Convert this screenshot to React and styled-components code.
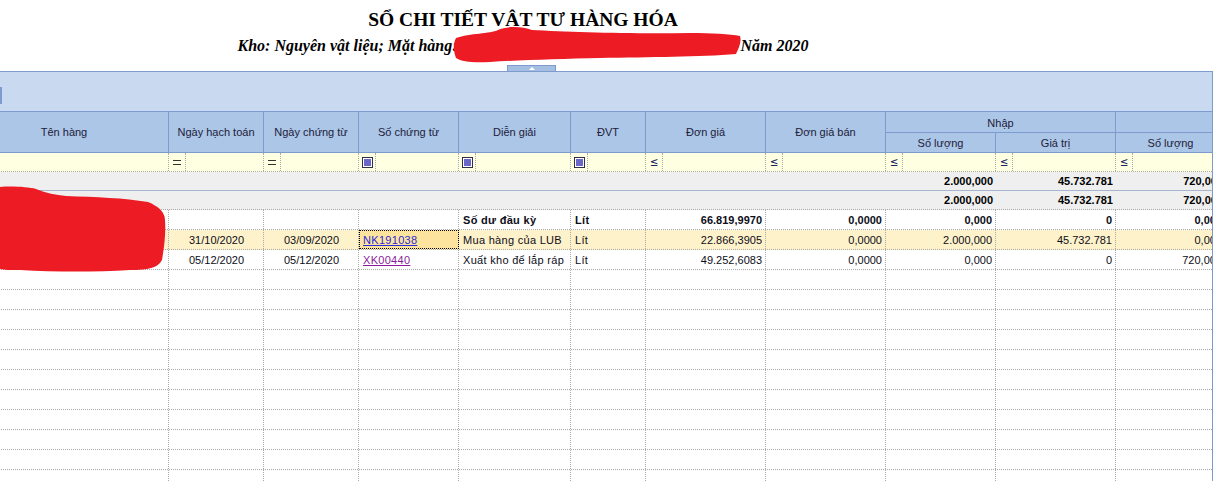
import React from 'react';
import styled, { createGlobalStyle } from 'styled-components';

const COLS = [209, 95, 95, 100, 112, 75, 120, 120, 110, 120, 110, 120];
const TEMPLATE = COLS.map((c) => c + 'px').join(' ');
const ALIGN = ['left', 'center', 'center', 'left', 'left', 'left', 'right', 'right', 'right', 'right', 'right', 'right'];
const BORDER = '#7d9bcf';
const DOT = '#a9a9a9';

const GlobalStyle = createGlobalStyle`
  html, body { margin: 0; padding: 0; background: #fff; overflow: hidden; }
  body { font-family: "Liberation Sans", Arial, sans-serif; }
`;

const Page = styled.div`
  position: relative;
  width: 1219px;
  height: 481px;
  overflow: hidden;
`;

const TitleBlock = styled.div`
  position: relative;
  width: 1046px;
  height: 71px;
  box-sizing: border-box;
  padding-top: 9px;
  text-align: center;
  font-family: "Liberation Serif", "Times New Roman", serif;
  color: #000;
`;

const Title = styled.div`
  font-size: 19.5px;
  font-weight: bold;
  line-height: 22px;
`;

const Subtitle = styled.div`
  margin-top: 5px;
  font-size: 16px;
  font-weight: bold;
  font-style: italic;
  line-height: 20px;
`;

const Hidden = styled.span`
  display: inline-block;
  width: 283px;
`;

const SplitHandle = styled.div`
  position: absolute;
  left: 507px;
  top: 65px;
  width: 47px;
  height: 5px;
  background: #a4bfe2;
  border: 1px solid ${BORDER};
  border-bottom: none;
  display: flex;
  justify-content: center;
  align-items: center;
  &::after {
    content: '';
    width: 0;
    height: 0;
    border-left: 3px solid transparent;
    border-right: 3px solid transparent;
    border-bottom: 3px solid #fff;
  }
`;

const Panel = styled.div`
  width: 1213px;
  box-sizing: border-box;
  border-top: 1px solid ${BORDER};
  border-right: 1px solid ${BORDER};
  background: #c9daf0;
`;

const Toolbar = styled.div`
  height: 39px;
  display: flex;
  align-items: flex-start;
`;

const ToolbarMark = styled.div`
  width: 2px;
  height: 17px;
  margin-top: 15px;
  background: ${BORDER};
`;

const Viewport = styled.div`
  width: 1212px;
  overflow: hidden;
  background: #fff;
  height: 420px;
`;

const Table = styled.div`
  margin-left: -40px;
  width: ${COLS.reduce((a, b) => a + b, 0)}px;
`;

const Header = styled.div`
  display: grid;
  grid-template-columns: ${TEMPLATE};
  grid-template-rows: 21px 20px;
  border-top: 1px solid ${BORDER};
  background: #abc6e6;
`;

const HeadCell = styled.div`
  grid-row: ${(p) => (p.$tall ? 'span 2' : 'auto')};
  grid-column: ${(p) => (p.$group ? 'span 2' : 'auto')};
  box-sizing: border-box;
  border-right: 1px solid ${BORDER};
  border-bottom: 1px solid ${BORDER};
  display: flex;
  align-items: center;
  justify-content: center;
  font-size: 11px;
  color: #22203a;
  white-space: nowrap;
  padding-top: ${(p) => (p.$group ? '1px' : '0')};
`;

const FilterRow = styled.div`
  display: grid;
  grid-template-columns: ${TEMPLATE};
  height: 19px;
  box-sizing: border-box;
  border-bottom: 1px dotted ${DOT};
  background: #ffffe1;
`;

const FilterCell = styled.div`
  box-sizing: border-box;
  border-right: 1px dotted ${DOT};
  display: flex;
  align-items: stretch;
`;

const OpBox = styled.div`
  width: 17px;
  box-sizing: border-box;
  border-right: 1px dotted ${DOT};
  display: flex;
  align-items: center;
  justify-content: center;
`;

const EqSign = styled.span`
  width: 8px;
  height: 3px;
  border-top: 1px solid #333;
  border-bottom: 1px solid #333;
`;

const LeSign = styled.span`
  font-size: 12px;
  line-height: 12px;
  color: #1c2563;
  font-family: "DejaVu Sans", sans-serif;
  transform: scaleX(0.85);
`;

const CheckSign = styled.span`
  width: 9px;
  height: 9px;
  border: 1px solid #30304a;
  background: #fff;
  display: flex;
  align-items: center;
  justify-content: center;
  &::after {
    content: '';
    width: 7px;
    height: 7px;
    background: #6a67c9;
  }
`;

const TotalRow = styled.div`
  display: grid;
  grid-template-columns: ${TEMPLATE};
  height: 19px;
  box-sizing: border-box;
  background: #efefef;
  border-bottom: 1px ${(p) => (p.$last ? 'dotted ' + DOT : 'solid #a6b6cf')};
`;

const TotalCell = styled.div`
  display: flex;
  align-items: center;
  justify-content: flex-end;
  padding-right: 3px;
  font-size: 11px;
  font-weight: bold;
  color: #000;
  white-space: nowrap;
`;

const DataRow = styled.div`
  display: grid;
  grid-template-columns: ${TEMPLATE};
  height: 20px;
  box-sizing: border-box;
  border-bottom: 1px dotted ${DOT};
  background: ${(p) => (p.$hl ? '#fef2cb' : '#fff')};
`;

const DataCell = styled.div`
  box-sizing: border-box;
  border-right: 1px dotted ${DOT};
  display: flex;
  align-items: center;
  justify-content: ${(p) => (p.$align === 'right' ? 'flex-end' : p.$align === 'center' ? 'center' : 'flex-start')};
  padding: 0 3px 0 4px;
  font-size: 11px;
  letter-spacing: ${(p) => (p.$align === 'left' ? '0.3px' : '0')};
  font-weight: ${(p) => (p.$bold ? 'bold' : 'normal')};
  color: #0d0d18;
  white-space: nowrap;
  overflow: hidden;
  background: ${(p) => (p.$selected ? '#fde49e' : 'transparent')};
  outline: ${(p) => (p.$selected ? '1px dotted #000' : 'none')};
  outline-offset: -1px;
`;

const Link = styled.span`
  color: ${(p) => (p.$visited ? '#8a1c9a' : '#2b2bd9')};
  text-decoration: underline;
`;

const Scribble = styled.svg`
  position: absolute;
  pointer-events: none;
`;

const FILTERS = ['none', 'eq', 'eq', 'chk', 'chk', 'chk', 'le', 'le', 'le', 'le', 'le', 'le'];

const ROWS = [
  { bold: true, cells: ['', '', '', '', 'Số dư đầu kỳ', 'Lít', '66.819,9970', '0,0000', '0,000', '0', '0,000', '0'] },
  {
    hl: true,
    cells: ['', '31/10/2020', '03/09/2020', { link: 'NK191038', selected: true }, 'Mua hàng của LUB', 'Lít', '22.866,3905', '0,0000', '2.000,000', '45.732.781', '0,000', '0'],
  },
  {
    cells: ['', '05/12/2020', '05/12/2020', { link: 'XK00440', visited: true }, 'Xuất kho để lắp ráp', 'Lít', '49.252,6083', '0,0000', '0,000', '0', '720,000', '45.732.781'],
  },
];

const TOTALS = ['', '', '', '', '', '', '', '', '2.000,000', '45.732.781', '720,000', '45.732.781'];

function Op({ type }) {
  if (type === 'none') return null;
  return (
    <OpBox>
      {type === 'eq' && <EqSign />}
      {type === 'chk' && <CheckSign />}
      {type === 'le' && <LeSign>≤</LeSign>}
    </OpBox>
  );
}

export default function App() {
  const empty = Array.from({ length: 11 });
  return (
    <Page>
      <GlobalStyle />
      <TitleBlock>
        <Title>SỔ CHI TIẾT VẬT TƯ HÀNG HÓA</Title>
        <Subtitle>
          Kho: Nguyên vật liệu; Mặt hàng:<Hidden />Năm 2020
        </Subtitle>
        <SplitHandle />
      </TitleBlock>
      <Panel>
        <Toolbar>
          <ToolbarMark />
        </Toolbar>
        <Viewport>
          <Table>
            <Header>
              <HeadCell $tall>Tên hàng</HeadCell>
              <HeadCell $tall>Ngày hạch toán</HeadCell>
              <HeadCell $tall>Ngày chứng từ</HeadCell>
              <HeadCell $tall>Số chứng từ</HeadCell>
              <HeadCell $tall>Diễn giải</HeadCell>
              <HeadCell $tall>ĐVT</HeadCell>
              <HeadCell $tall>Đơn giá</HeadCell>
              <HeadCell $tall>Đơn giá bán</HeadCell>
              <HeadCell $group>Nhập</HeadCell>
              <HeadCell $group>Xuất</HeadCell>
              <HeadCell>Số lượng</HeadCell>
              <HeadCell>Giá trị</HeadCell>
              <HeadCell>Số lượng</HeadCell>
              <HeadCell>Giá trị</HeadCell>
            </Header>
            <FilterRow>
              {FILTERS.map((f, i) => (
                <FilterCell key={i}>
                  <Op type={f} />
                </FilterCell>
              ))}
            </FilterRow>
            <TotalRow>
              {TOTALS.map((t, i) => (
                <TotalCell key={i}>{t}</TotalCell>
              ))}
            </TotalRow>
            <TotalRow $last>
              {TOTALS.map((t, i) => (
                <TotalCell key={i}>{t}</TotalCell>
              ))}
            </TotalRow>
            {ROWS.map((r, ri) => (
              <DataRow key={ri} $hl={r.hl}>
                {r.cells.map((c, ci) =>
                  typeof c === 'object' ? (
                    <DataCell key={ci} $align={ALIGN[ci]} $selected={c.selected}>
                      <Link $visited={c.visited}>{c.link}</Link>
                    </DataCell>
                  ) : (
                    <DataCell key={ci} $align={ALIGN[ci]} $bold={r.bold}>
                      {c}
                    </DataCell>
                  )
                )}
              </DataRow>
            ))}
            {empty.map((_, ri) => (
              <DataRow key={'e' + ri}>
                {COLS.map((_, ci) => (
                  <DataCell key={ci} />
                ))}
              </DataRow>
            ))}
          </Table>
        </Viewport>
      </Panel>
      <Scribble style={{ left: 450, top: 24 }} width="300" height="44" viewBox="0 0 300 44">
        <path
          d="M6 14 C20 9 40 10 48 6 C56 2 72 2 82 6 C120 8 180 10 240 9 C262 9 280 10 290 12 C292 18 288 26 286 30 C250 33 200 33 150 34 C110 35 70 36 40 38 C24 39 12 38 6 34 C3 26 3 20 6 14 Z"
          fill="#ed1c24"
        />
      </Scribble>
      <Scribble style={{ left: 0, top: 184 }} width="170" height="92" viewBox="0 0 170 92">
        <path
          d="M0 3 C12 2 28 3 36 5 C46 9 56 11 66 12 C96 13 124 14 148 18 C158 22 165 28 165 36 C166 50 164 64 162 76 C158 84 148 86 130 86 C96 88 56 88 20 86 C10 86 4 86 0 85 Z"
          fill="#ed1c24"
        />
      </Scribble>
    </Page>
  );
}
